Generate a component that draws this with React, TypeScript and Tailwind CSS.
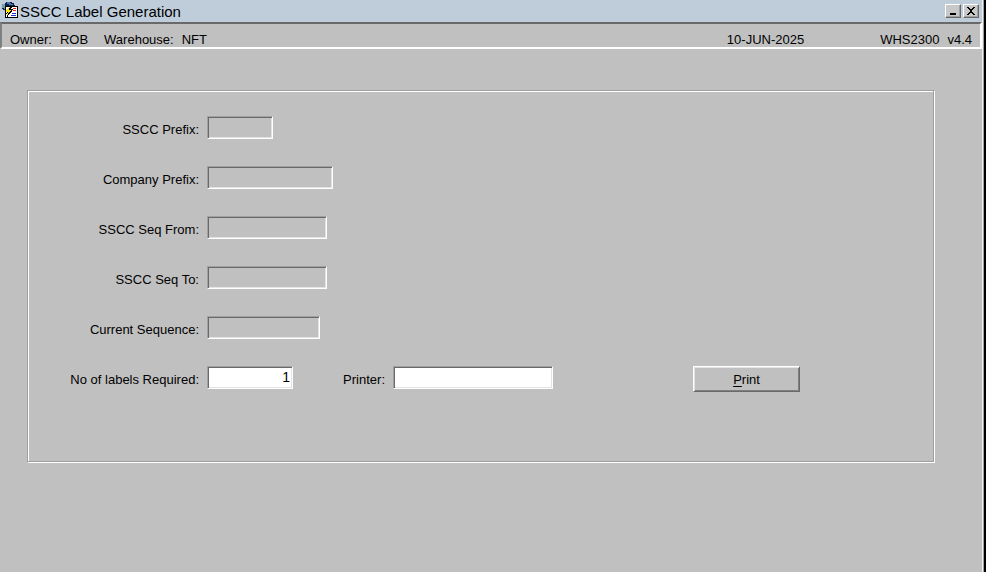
import { useState } from 'react';

const SUNKEN =
  'h-[23px] rounded-none border border-t-[#a0a0a0] border-l-[#a0a0a0] border-b-white border-r-white shadow-[inset_1px_1px_0_#696969,inset_-1px_-1px_0_#e3e3e3] outline-none px-[2px] pb-[2px] text-sm';

const LABEL = 'pt-[6px] text-right';

const READ_ONLY_FIELDS = [
  { id: 'sscc-prefix', label: 'SSCC Prefix:', width: 'w-[66px]' },
  { id: 'company-prefix', label: 'Company Prefix:', width: 'w-[126px]' },
  { id: 'seq-from', label: 'SSCC Seq From:', width: 'w-[120px]' },
  { id: 'seq-to', label: 'SSCC Seq To:', width: 'w-[120px]' },
  { id: 'current-seq', label: 'Current Sequence:', width: 'w-[113px]' },
];

function AppIcon() {
  return (
    <svg width="18" height="20" viewBox="0 0 18 20" shapeRendering="crispEdges" aria-hidden="true">
      {/* globe */}
      <path d="M4 1h6v1h2v2h1v4h-1v2H3V9H1V8H0V4h1V3h2V2h1z" fill="#101c50" />
      <path d="M0 3h3v2h1v3H2V7H0z" fill="#6fa0a8" />
      <path d="M5 1h3v1h1v2H7V3H5z" fill="#4a78a8" />
      <path d="M9 3h2v1H9z" fill="#2fa060" />
      {/* card */}
      <path d="M3 5h13v12H3z" fill="#000" />
      <path d="M4 6h11v10H4z" fill="#fff" />
      <path d="M8 6h2v1H9v1h2v1h-1v2H9v1H8v1H7v1H6v2H5v-3H4v-1h1v-2h1V8h1V7h1z" fill="#000" />
      <path d="M7 6h1v1H7v2h2v1H8v1H7v1H6v2H5v-2h1v-1H4V9h1V8h1V7h1z" fill="#ffe600" />
      <path d="M11 7h3v1h-3zM11 9h3v1h-3z" fill="#e02020" />
      <path d="M10 12h4v1h-4zM9 14h5v1H9z" fill="#2030c8" />
    </svg>
  );
}

const WINDOW_BUTTON =
  'flex h-[14px] w-4 items-center justify-center border border-t-white border-l-white border-b-[#696969] border-r-[#696969] bg-[#c8c8c8] shadow-[inset_-1px_-1px_0_#a0a0a0]';

export default function App() {
  const [labels, setLabels] = useState('1');
  const [printer, setPrinter] = useState('');

  return (
    <div className="flex min-h-screen bg-black pr-[2px] font-['Liberation_Sans',Arial,sans-serif] text-[13px] leading-4 text-black">
      <div className="flex-1 border-r border-[#a0a0a0] bg-[#c0c0c0] shadow-[inset_-1px_0_0_#f0f0f0]">
        <header className="mr-px flex h-[22px] items-center justify-between bg-[#bfcddb] pr-[3px] pl-[2px]">
          <div className="flex items-center">
            <AppIcon />
            <h1 className="pt-[2px] text-[15px]">SSCC Label Generation</h1>
          </div>
          <div className="flex gap-[2px]">
            <button type="button" aria-label="Minimize" className={WINDOW_BUTTON}>
              <svg width="10" height="10" viewBox="0 0 10 10" shapeRendering="crispEdges">
                <path d="M2 7h6v2H2z" />
              </svg>
            </button>
            <button type="button" aria-label="Close" className={WINDOW_BUTTON}>
              <svg width="10" height="10" viewBox="0 0 10 10" shapeRendering="crispEdges">
                <path d="M1 1h2v1h1v1h2V2h1V1h2v1H8v1H7v1H6v2h1v1h1v1h1v1H7V8H6V7H4v1H3v1H1V8h1V7h1V6h1V4H3V3H2V2H1z" />
              </svg>
            </button>
          </div>
        </header>

        <div className="mr-px flex h-[27px] items-start border-2 border-t-[#696969] border-l-[#808080] border-r-white border-b-white px-2 pt-2">
          <dl className="flex flex-1 gap-4">
            <div className="flex gap-2">
              <dt>Owner:</dt>
              <dd>ROB</dd>
            </div>
            <div className="flex gap-2">
              <dt>Warehouse:</dt>
              <dd>NFT</dd>
            </div>
          </dl>
          <span className="mr-[76px]">10-JUN-2025</span>
          <div className="flex gap-2">
            <span>WHS2300</span>
            <span>v4.4</span>
          </div>
        </div>

        <main className="pt-[41px] pr-[49px] pl-[27px]">
          <form
            className="border border-[#a0a0a0] shadow-[1px_1px_0_#fff,inset_1px_1px_0_#fff]"
            onSubmit={(e) => e.preventDefault()}
          >
            <div className="flex flex-col gap-[27px] pt-[25px] pb-[69px]">
              {READ_ONLY_FIELDS.map((field) => (
                <div key={field.id} className="flex items-start gap-2">
                  <label htmlFor={field.id} className={`${LABEL} w-[171px]`}>
                    {field.label}
                  </label>
                  <input id={field.id} readOnly className={`${SUNKEN} ${field.width} bg-[#c0c0c0]`} />
                </div>
              ))}
              <div className="flex items-start gap-2">
                <label htmlFor="labels" className={`${LABEL} w-[171px]`}>
                  No of labels Required:
                </label>
                <input
                  id="labels"
                  value={labels}
                  onChange={(e) => setLabels(e.target.value)}
                  className={`${SUNKEN} w-[86px] bg-white text-right`}
                />
                <label htmlFor="printer" className={`${LABEL} w-[84px]`}>
                  Printer:
                </label>
                <input
                  id="printer"
                  value={printer}
                  onChange={(e) => setPrinter(e.target.value)}
                  className={`${SUNKEN} w-40 bg-white`}
                />
                <button
                  type="submit"
                  className="ml-[132px] h-[26px] w-[107px] border border-t-white border-l-white border-b-[#696969] border-r-[#696969] pt-[2px] shadow-[inset_1px_1px_0_#e3e3e3,inset_-1px_-1px_0_#808080]"
                >
                  <span className="underline underline-offset-2">P</span>rint
                </button>
              </div>
            </div>
          </form>
        </main>
      </div>
    </div>
  );
}
